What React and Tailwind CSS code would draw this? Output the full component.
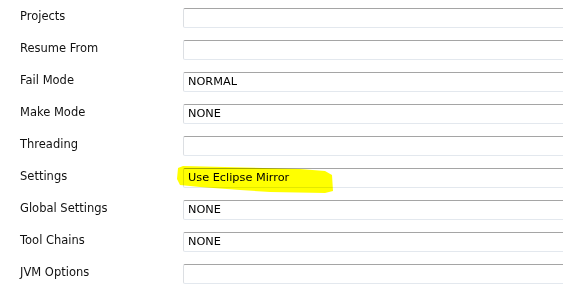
const rows = [
  { label: 'Projects', value: '' },
  { label: 'Resume From', value: '' },
  { label: 'Fail Mode', value: 'NORMAL' },
  { label: 'Make Mode', value: 'NONE' },
  { label: 'Threading', value: '' },
  { label: 'Settings', value: 'Use Eclipse Mirror', marked: true },
  { label: 'Global Settings', value: 'NONE' },
  { label: 'Tool Chains', value: 'NONE' },
  { label: 'JVM Options', value: '' },
]

function Marker() {
  // hand-drawn yellow highlighter stroke
  return (
    <svg
      className="absolute left-[-6px] top-[-3px] mix-blend-multiply pointer-events-none"
      width="160"
      height="32"
      viewBox="0 0 160 32"
    >
      <path
        d="M1 3 L6 1 L123 4 L148 6 L155 10 L156 26 L148 28 L93 27 L63 25 L23 22 L3 20 L0 14 Z"
        fill="#ffff00"
      />
    </svg>
  )
}

export default function App() {
  return (
    <div className="w-[563px] h-[305px] overflow-hidden bg-white pt-2 font-['DejaVu_Sans',Verdana,sans-serif]">
      {rows.map((row) => (
        <div key={row.label} className="flex items-center h-[32px] pl-5">
          <div className="w-[163px] shrink-0 text-[11.5px] text-[#111] -mt-[15px]">{row.label}</div>
          <div className="relative -mt-[12px]">
            <div className="relative w-[420px] h-[20px] flex items-center pl-[4px] border border-t-[#a5a5a5] border-x-[#dcdfe3] border-b-[#e3e8ee] rounded-[2px] bg-white text-[11.3px] text-black">
              {row.value}
            </div>
            {row.marked && <Marker />}
          </div>
        </div>
      ))}
    </div>
  )
}
